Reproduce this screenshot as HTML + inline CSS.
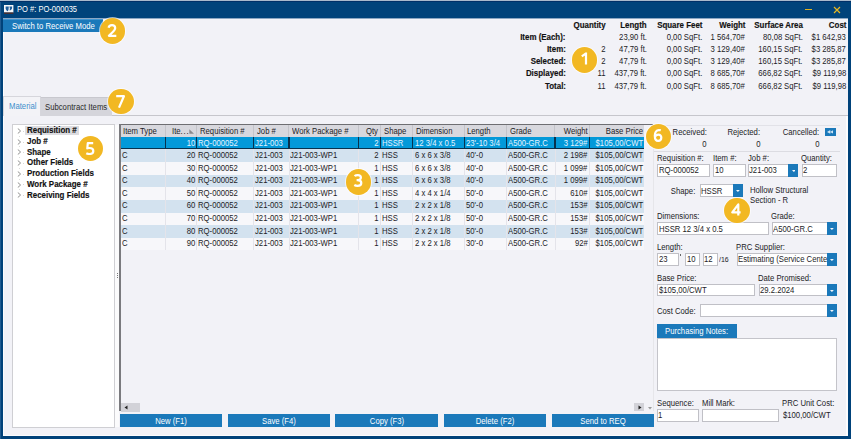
<!DOCTYPE html><html><head><meta charset="utf-8"><style>
*{box-sizing:border-box}
html,body{margin:0;padding:0}
body{width:851px;height:439px;overflow:hidden;position:relative;background:#00427a;font-family:"Liberation Sans",sans-serif;font-size:7.8px;color:#1c1c26}
.t{position:absolute;white-space:nowrap;line-height:12px;height:12px;font-size:8.3px;transform:scaleX(0.93)}
.b{position:absolute}
.bd{font-weight:bold;color:#111;transform:scaleX(0.955);-webkit-text-stroke:0.15px #111}
.w{color:#fff}
.circ{position:absolute;border-radius:50%;background:#f2b823;color:#fff;font-weight:bold;text-align:center;font-size:17px;box-shadow:0 0 0 1px rgba(255,255,255,0.6)}
</style></head><body>
<div class="b" style="left:0.00px;top:0.00px;width:851.00px;height:1.00px;background:#a9b9cc"></div>
<div class="b" style="left:0.00px;top:1.00px;width:851.00px;height:1.00px;background:#003068"></div>
<div class="b" style="left:0.00px;top:2.00px;width:851.00px;height:15.60px;background:#00437b"></div>
<div class="b" style="left:3.00px;top:17.60px;width:844.70px;height:418.40px;background:#f2f2f7"></div>
<div class="b" style="left:3.00px;top:17.60px;width:845.00px;height:1.20px;background:#8ca7c3"></div>
<div class="b" style="left:0.00px;top:2.00px;width:1.00px;height:437.00px;background:#1f5a90"></div>
<div class="b" style="left:3.00px;top:18.80px;width:1.30px;height:417.20px;background:#fbfbfd"></div>
<div class="b" style="left:3.00px;top:434.80px;width:845.00px;height:1.20px;background:#fbfbfd"></div>
<svg class="b" style="left:4.3px;top:4.8px" width="9.4" height="8.8" viewBox="0 0 9.4 8.8"><rect x="0" y="0" width="9.4" height="7.5" fill="#f6f8fa"/><rect x="0" y="7.5" width="9.4" height="1.3" fill="#5a2e22"/><path d="M1.6 1.6C2.6 1.4 3.6 1.4 4.8 1.6L4.6 4.2C4.4 5.4 3.8 6 3.4 6.2C2.6 5.6 1.8 4.6 1.6 3.4Z" fill="#1e5e9c"/><path d="M5.3 1.6C6.3 1.4 7.3 1.4 8.2 1.6L8 3.4C7.6 4.6 6.8 5.2 5.6 5.4L5.9 3.2Z" fill="#1e5e9c"/></svg>
<div class="t w" style="left:16.90px;top:3.90px;transform-origin:0 50%;font-size:8.14px">PO #: PO-000035</div>
<div class="b" style="left:805.00px;top:9.00px;width:6.50px;height:1.20px;background:#e0b020"></div>
<svg class="b" style="left:833px;top:5.5px" width="8" height="8" viewBox="0 0 8 8"><path d="M1 1L7 7M7 1L1 7" stroke="#e8b820" stroke-width="1.2"/></svg>
<div class="b" style="left:3.00px;top:18.80px;width:100.20px;height:13.70px;background:#1b79ba;border-top:1px solid #3f95d2"></div>
<div class="t w" style="left:11.70px;top:19.60px;transform-origin:0 50%;">Switch to Receive Mode</div>
<div class="t bd" style="right:285.10px;top:31.40px;transform-origin:100% 50%;">Item (Each):</div>
<div class="t bd" style="right:285.10px;top:43.20px;transform-origin:100% 50%;">Item:</div>
<div class="t bd" style="right:285.10px;top:55.00px;transform-origin:100% 50%;">Selected:</div>
<div class="t bd" style="right:285.10px;top:67.30px;transform-origin:100% 50%;">Displayed:</div>
<div class="t bd" style="right:285.10px;top:79.50px;transform-origin:100% 50%;">Total:</div>
<div class="t bd" style="right:245.00px;top:19.40px;transform-origin:100% 50%;">Quantity</div>
<div class="t " style="right:245.00px;top:43.20px;transform-origin:100% 50%;">2</div>
<div class="t " style="right:245.00px;top:55.00px;transform-origin:100% 50%;">2</div>
<div class="t " style="right:245.00px;top:67.30px;transform-origin:100% 50%;">11</div>
<div class="t " style="right:245.00px;top:79.50px;transform-origin:100% 50%;">11</div>
<div class="t bd" style="right:204.20px;top:19.40px;transform-origin:100% 50%;">Length</div>
<div class="t " style="right:204.20px;top:31.40px;transform-origin:100% 50%;">23,90 ft.</div>
<div class="t " style="right:204.20px;top:43.20px;transform-origin:100% 50%;">47,79 ft.</div>
<div class="t " style="right:204.20px;top:55.00px;transform-origin:100% 50%;">47,79 ft.</div>
<div class="t " style="right:204.20px;top:67.30px;transform-origin:100% 50%;">437,79 ft.</div>
<div class="t " style="right:204.20px;top:79.50px;transform-origin:100% 50%;">437,79 ft.</div>
<div class="t bd" style="right:148.80px;top:19.40px;transform-origin:100% 50%;">Square Feet</div>
<div class="t " style="right:148.80px;top:31.40px;transform-origin:100% 50%;">0,00 SqFt.</div>
<div class="t " style="right:148.80px;top:43.20px;transform-origin:100% 50%;">0,00 SqFt.</div>
<div class="t " style="right:148.80px;top:55.00px;transform-origin:100% 50%;">0,00 SqFt.</div>
<div class="t " style="right:148.80px;top:67.30px;transform-origin:100% 50%;">0,00 SqFt.</div>
<div class="t " style="right:148.80px;top:79.50px;transform-origin:100% 50%;">0,00 SqFt.</div>
<div class="t bd" style="right:105.70px;top:19.40px;transform-origin:100% 50%;">Weight</div>
<div class="t " style="right:105.70px;top:31.40px;transform-origin:100% 50%;">1 564,70#</div>
<div class="t " style="right:105.70px;top:43.20px;transform-origin:100% 50%;">3 129,40#</div>
<div class="t " style="right:105.70px;top:55.00px;transform-origin:100% 50%;">3 129,40#</div>
<div class="t " style="right:105.70px;top:67.30px;transform-origin:100% 50%;">8 685,70#</div>
<div class="t " style="right:105.70px;top:79.50px;transform-origin:100% 50%;">8 685,70#</div>
<div class="t bd" style="right:48.00px;top:19.40px;transform-origin:100% 50%;">Surface Area</div>
<div class="t " style="right:48.00px;top:31.40px;transform-origin:100% 50%;">80,08 SqFt.</div>
<div class="t " style="right:48.00px;top:43.20px;transform-origin:100% 50%;">160,15 SqFt.</div>
<div class="t " style="right:48.00px;top:55.00px;transform-origin:100% 50%;">160,15 SqFt.</div>
<div class="t " style="right:48.00px;top:67.30px;transform-origin:100% 50%;">666,82 SqFt.</div>
<div class="t " style="right:48.00px;top:79.50px;transform-origin:100% 50%;">666,82 SqFt.</div>
<div class="t bd" style="right:5.00px;top:19.40px;transform-origin:100% 50%;">Cost</div>
<div class="t " style="right:5.00px;top:31.40px;transform-origin:100% 50%;">$1 642,93</div>
<div class="t " style="right:5.00px;top:43.20px;transform-origin:100% 50%;">$3 285,87</div>
<div class="t " style="right:5.00px;top:55.00px;transform-origin:100% 50%;">$3 285,87</div>
<div class="t " style="right:5.00px;top:67.30px;transform-origin:100% 50%;">$9 119,98</div>
<div class="t " style="right:5.00px;top:79.50px;transform-origin:100% 50%;">$9 119,98</div>
<div class="b" style="left:3.00px;top:115.20px;width:845.00px;height:1.00px;background:#c6c6cc"></div>
<div class="b" style="left:846.20px;top:116.20px;width:1.50px;height:319.80px;background:#fdfdfe"></div>
<div class="b" style="left:3.00px;top:96.00px;width:37.60px;height:20.20px;background:#f3f3f7;border:1px solid #d6d6dc;border-bottom:none"></div>
<div class="b" style="left:40.60px;top:97.00px;width:71.40px;height:18.70px;background:#d5d5db;border-top:1px solid #c8c8ce"></div>
<div class="t " style="left:8.60px;top:100.20px;transform-origin:0 50%;color:#3d8fcc">Material</div>
<div class="t " style="left:44.70px;top:101.20px;transform-origin:0 50%;color:#2a2a2a">Subcontract Items</div>
<div class="b" style="left:12.10px;top:124.40px;width:102.90px;height:303.50px;background:#fff;border:1px solid #cfcfd3"></div>
<div class="b" style="left:25.00px;top:126.10px;width:53.50px;height:9.40px;background:#dcdce0"></div>
<div class="t bd" style="left:27.30px;top:124.20px;transform-origin:0 50%;">Requisition #</div>
<svg class="b" style="left:17.2px;top:128.00px" width="5" height="6" viewBox="0 0 5 6"><path d="M0.8 0.5L3.6 3L0.8 5.5" fill="none" stroke="#8a8a8a" stroke-width="0.95"/></svg>
<div class="b" style="left:23.20px;top:130.80px;width:1.00px;height:0.80px;background:#d8d8d8"></div>
<div class="b" style="left:19.30px;top:135.70px;width:0.80px;height:0.80px;background:#dadada"></div>
<div class="t bd" style="left:27.30px;top:134.92px;transform-origin:0 50%;">Job #</div>
<svg class="b" style="left:17.2px;top:138.72px" width="5" height="6" viewBox="0 0 5 6"><path d="M0.8 0.5L3.6 3L0.8 5.5" fill="none" stroke="#8a8a8a" stroke-width="0.95"/></svg>
<div class="b" style="left:23.20px;top:141.52px;width:1.00px;height:0.80px;background:#d8d8d8"></div>
<div class="b" style="left:19.30px;top:146.42px;width:0.80px;height:0.80px;background:#dadada"></div>
<div class="t bd" style="left:27.30px;top:145.64px;transform-origin:0 50%;">Shape</div>
<svg class="b" style="left:17.2px;top:149.44px" width="5" height="6" viewBox="0 0 5 6"><path d="M0.8 0.5L3.6 3L0.8 5.5" fill="none" stroke="#8a8a8a" stroke-width="0.95"/></svg>
<div class="b" style="left:23.20px;top:152.24px;width:1.00px;height:0.80px;background:#d8d8d8"></div>
<div class="b" style="left:19.30px;top:157.14px;width:0.80px;height:0.80px;background:#dadada"></div>
<div class="t bd" style="left:27.30px;top:156.36px;transform-origin:0 50%;">Other Fields</div>
<svg class="b" style="left:17.2px;top:160.16px" width="5" height="6" viewBox="0 0 5 6"><path d="M0.8 0.5L3.6 3L0.8 5.5" fill="none" stroke="#8a8a8a" stroke-width="0.95"/></svg>
<div class="b" style="left:23.20px;top:162.96px;width:1.00px;height:0.80px;background:#d8d8d8"></div>
<div class="b" style="left:19.30px;top:167.86px;width:0.80px;height:0.80px;background:#dadada"></div>
<div class="t bd" style="left:27.30px;top:167.08px;transform-origin:0 50%;">Production Fields</div>
<svg class="b" style="left:17.2px;top:170.88px" width="5" height="6" viewBox="0 0 5 6"><path d="M0.8 0.5L3.6 3L0.8 5.5" fill="none" stroke="#8a8a8a" stroke-width="0.95"/></svg>
<div class="b" style="left:23.20px;top:173.68px;width:1.00px;height:0.80px;background:#d8d8d8"></div>
<div class="b" style="left:19.30px;top:178.58px;width:0.80px;height:0.80px;background:#dadada"></div>
<div class="t bd" style="left:27.30px;top:177.80px;transform-origin:0 50%;">Work Package #</div>
<svg class="b" style="left:17.2px;top:181.60px" width="5" height="6" viewBox="0 0 5 6"><path d="M0.8 0.5L3.6 3L0.8 5.5" fill="none" stroke="#8a8a8a" stroke-width="0.95"/></svg>
<div class="b" style="left:23.20px;top:184.40px;width:1.00px;height:0.80px;background:#d8d8d8"></div>
<div class="b" style="left:19.30px;top:189.30px;width:0.80px;height:0.80px;background:#dadada"></div>
<div class="t bd" style="left:27.30px;top:188.52px;transform-origin:0 50%;">Receiving Fields</div>
<svg class="b" style="left:17.2px;top:192.32px" width="5" height="6" viewBox="0 0 5 6"><path d="M0.8 0.5L3.6 3L0.8 5.5" fill="none" stroke="#8a8a8a" stroke-width="0.95"/></svg>
<div class="b" style="left:23.20px;top:195.12px;width:1.00px;height:0.80px;background:#d8d8d8"></div>
<div class="b" style="left:114.80px;top:124.50px;width:4.30px;height:302.90px;background:#fbfbfc"></div>
<div class="b" style="left:116.90px;top:273.20px;width:0.90px;height:0.90px;background:#777"></div>
<div class="b" style="left:116.90px;top:274.90px;width:0.90px;height:0.90px;background:#777"></div>
<div class="b" style="left:116.90px;top:276.60px;width:0.90px;height:0.90px;background:#777"></div>
<div class="b" style="left:119.10px;top:124.20px;width:534.60px;height:1.20px;background:#6e6e72"></div>
<div class="b" style="left:119.10px;top:124.20px;width:1.80px;height:287.30px;background:#7a7a7e"></div>
<div class="b" style="left:652.80px;top:124.20px;width:0.90px;height:287.30px;background:#e6e6ea"></div>
<div class="b" style="left:120.60px;top:125.20px;width:523.60px;height:12.00px;background:#d8d8de"></div>
<div class="b" style="left:165.00px;top:125.20px;width:1.00px;height:12.00px;background:#c4c4ca"></div>
<div class="b" style="left:195.90px;top:125.20px;width:1.00px;height:12.00px;background:#c4c4ca"></div>
<div class="b" style="left:252.90px;top:125.20px;width:1.00px;height:12.00px;background:#c4c4ca"></div>
<div class="b" style="left:288.40px;top:125.20px;width:1.00px;height:12.00px;background:#c4c4ca"></div>
<div class="b" style="left:358.20px;top:125.20px;width:1.00px;height:12.00px;background:#c4c4ca"></div>
<div class="b" style="left:379.90px;top:125.20px;width:1.00px;height:12.00px;background:#c4c4ca"></div>
<div class="b" style="left:412.10px;top:125.20px;width:1.00px;height:12.00px;background:#c4c4ca"></div>
<div class="b" style="left:463.70px;top:125.20px;width:1.00px;height:12.00px;background:#c4c4ca"></div>
<div class="b" style="left:506.00px;top:125.20px;width:1.00px;height:12.00px;background:#c4c4ca"></div>
<div class="b" style="left:554.40px;top:125.20px;width:1.00px;height:12.00px;background:#c4c4ca"></div>
<div class="b" style="left:589.20px;top:125.20px;width:1.00px;height:12.00px;background:#c4c4ca"></div>
<div class="b" style="left:120.60px;top:136.60px;width:523.60px;height:0.60px;background:#f4ecec"></div>
<div class="t " style="left:122.90px;top:125.00px;transform-origin:0 50%;">Item Type</div>
<div class="t " style="left:171.50px;top:125.00px;transform-origin:0 50%;">Ite<span style="letter-spacing:0.9px">...</span></div>
<svg class="b" style="left:189.4px;top:128.8px" width="5" height="5" viewBox="0 0 5 5"><path d="M0.3 0.2V4.7H5Z" fill="#8a8a8e"/></svg>
<div class="t " style="left:200.00px;top:125.00px;transform-origin:0 50%;">Requisition #</div>
<div class="t " style="left:256.50px;top:125.00px;transform-origin:0 50%;">Job #</div>
<div class="t " style="left:292.30px;top:125.00px;transform-origin:0 50%;">Work Package #</div>
<div class="t " style="right:473.10px;top:125.00px;transform-origin:100% 50%;">Qty</div>
<div class="t " style="left:383.80px;top:125.00px;transform-origin:0 50%;">Shape</div>
<div class="t " style="left:416.10px;top:125.00px;transform-origin:0 50%;">Dimension</div>
<div class="t " style="left:467.40px;top:125.00px;transform-origin:0 50%;">Length</div>
<div class="t " style="left:509.70px;top:125.00px;transform-origin:0 50%;">Grade</div>
<div class="t " style="right:263.20px;top:125.00px;transform-origin:100% 50%;">Weight</div>
<div class="t " style="right:208.10px;top:125.00px;transform-origin:100% 50%;">Base Price</div>
<div class="b" style="left:120.60px;top:137.20px;width:523.60px;height:12.20px;background:#0399d9"></div>
<div class="b" style="left:120.60px;top:148.40px;width:523.60px;height:1.00px;background:#08324e"></div>
<div class="b" style="left:164.80px;top:137.20px;width:1.40px;height:12.20px;background:#08324e"></div>
<div class="b" style="left:195.70px;top:137.20px;width:1.40px;height:12.20px;background:#08324e"></div>
<div class="b" style="left:252.70px;top:137.20px;width:1.40px;height:12.20px;background:#08324e"></div>
<div class="b" style="left:288.20px;top:137.20px;width:1.40px;height:12.20px;background:#08324e"></div>
<div class="b" style="left:358.00px;top:137.20px;width:1.40px;height:12.20px;background:#08324e"></div>
<div class="b" style="left:379.70px;top:137.20px;width:1.40px;height:12.20px;background:#08324e"></div>
<div class="b" style="left:411.90px;top:137.20px;width:1.40px;height:12.20px;background:#08324e"></div>
<div class="b" style="left:463.50px;top:137.20px;width:1.40px;height:12.20px;background:#08324e"></div>
<div class="b" style="left:505.80px;top:137.20px;width:1.40px;height:12.20px;background:#08324e"></div>
<div class="b" style="left:554.20px;top:137.20px;width:1.40px;height:12.20px;background:#08324e"></div>
<div class="b" style="left:589.00px;top:137.20px;width:1.40px;height:12.20px;background:#08324e"></div>
<div class="t w" style="right:656.00px;top:136.50px;transform-origin:100% 50%;color:#e6f4ff">10</div>
<div class="t w" style="left:198.30px;top:136.50px;transform-origin:0 50%;color:#e6f4ff">RQ-000052</div>
<div class="t w" style="left:254.90px;top:136.50px;transform-origin:0 50%;color:#e6f4ff">J21-003</div>
<div class="t w" style="right:472.20px;top:136.50px;transform-origin:100% 50%;color:#e6f4ff">2</div>
<div class="t w" style="left:381.90px;top:136.50px;transform-origin:0 50%;color:#e6f4ff">HSSR</div>
<div class="t w" style="left:415.30px;top:136.50px;transform-origin:0 50%;color:#e6f4ff">12 3/4 x 0.5</div>
<div class="t w" style="left:465.50px;top:136.50px;transform-origin:0 50%;color:#e6f4ff">23'-10 3/4</div>
<div class="t w" style="left:507.60px;top:136.50px;transform-origin:0 50%;color:#e6f4ff">A500-GR.C</div>
<div class="t w" style="right:263.20px;top:136.50px;transform-origin:100% 50%;color:#e6f4ff">3 129#</div>
<div class="t w" style="right:207.40px;top:136.50px;transform-origin:100% 50%;color:#e6f4ff">$105,00/CWT</div>
<div class="b" style="left:120.60px;top:149.40px;width:523.60px;height:12.63px;background:#d3e2ef"></div>
<div class="b" style="left:165.10px;top:149.40px;width:0.80px;height:12.63px;background:#e4e4ea"></div>
<div class="b" style="left:196.00px;top:149.40px;width:0.80px;height:12.63px;background:#e4e4ea"></div>
<div class="b" style="left:253.00px;top:149.40px;width:0.80px;height:12.63px;background:#e4e4ea"></div>
<div class="b" style="left:288.50px;top:149.40px;width:0.80px;height:12.63px;background:#e4e4ea"></div>
<div class="b" style="left:358.30px;top:149.40px;width:0.80px;height:12.63px;background:#e4e4ea"></div>
<div class="b" style="left:380.00px;top:149.40px;width:0.80px;height:12.63px;background:#e4e4ea"></div>
<div class="b" style="left:412.20px;top:149.40px;width:0.80px;height:12.63px;background:#e4e4ea"></div>
<div class="b" style="left:463.80px;top:149.40px;width:0.80px;height:12.63px;background:#e4e4ea"></div>
<div class="b" style="left:506.10px;top:149.40px;width:0.80px;height:12.63px;background:#e4e4ea"></div>
<div class="b" style="left:554.50px;top:149.40px;width:0.80px;height:12.63px;background:#e4e4ea"></div>
<div class="b" style="left:589.30px;top:149.40px;width:0.80px;height:12.63px;background:#e4e4ea"></div>
<div class="t " style="left:121.80px;top:148.91px;transform-origin:0 50%;">C</div>
<div class="t " style="right:656.00px;top:148.91px;transform-origin:100% 50%;">20</div>
<div class="t " style="left:198.30px;top:148.91px;transform-origin:0 50%;">RQ-000052</div>
<div class="t " style="left:254.90px;top:148.91px;transform-origin:0 50%;">J21-003</div>
<div class="t " style="left:289.80px;top:148.91px;transform-origin:0 50%;">J21-003-WP1</div>
<div class="t " style="right:472.20px;top:148.91px;transform-origin:100% 50%;">2</div>
<div class="t " style="left:381.90px;top:148.91px;transform-origin:0 50%;">HSS</div>
<div class="t " style="left:415.30px;top:148.91px;transform-origin:0 50%;">6 x 6 x 3/8</div>
<div class="t " style="left:465.50px;top:148.91px;transform-origin:0 50%;">40'-0</div>
<div class="t " style="left:507.60px;top:148.91px;transform-origin:0 50%;">A500-GR.C</div>
<div class="t " style="right:263.20px;top:148.91px;transform-origin:100% 50%;">2 198#</div>
<div class="t " style="right:207.40px;top:148.91px;transform-origin:100% 50%;">$105,00/CWT</div>
<div class="b" style="left:120.60px;top:162.03px;width:523.60px;height:12.63px;background:#f7f7fa"></div>
<div class="b" style="left:165.10px;top:162.03px;width:0.80px;height:12.63px;background:#e4e4ea"></div>
<div class="b" style="left:196.00px;top:162.03px;width:0.80px;height:12.63px;background:#e4e4ea"></div>
<div class="b" style="left:253.00px;top:162.03px;width:0.80px;height:12.63px;background:#e4e4ea"></div>
<div class="b" style="left:288.50px;top:162.03px;width:0.80px;height:12.63px;background:#e4e4ea"></div>
<div class="b" style="left:358.30px;top:162.03px;width:0.80px;height:12.63px;background:#e4e4ea"></div>
<div class="b" style="left:380.00px;top:162.03px;width:0.80px;height:12.63px;background:#e4e4ea"></div>
<div class="b" style="left:412.20px;top:162.03px;width:0.80px;height:12.63px;background:#e4e4ea"></div>
<div class="b" style="left:463.80px;top:162.03px;width:0.80px;height:12.63px;background:#e4e4ea"></div>
<div class="b" style="left:506.10px;top:162.03px;width:0.80px;height:12.63px;background:#e4e4ea"></div>
<div class="b" style="left:554.50px;top:162.03px;width:0.80px;height:12.63px;background:#e4e4ea"></div>
<div class="b" style="left:589.30px;top:162.03px;width:0.80px;height:12.63px;background:#e4e4ea"></div>
<div class="t " style="left:121.80px;top:161.54px;transform-origin:0 50%;">C</div>
<div class="t " style="right:656.00px;top:161.54px;transform-origin:100% 50%;">30</div>
<div class="t " style="left:198.30px;top:161.54px;transform-origin:0 50%;">RQ-000052</div>
<div class="t " style="left:254.90px;top:161.54px;transform-origin:0 50%;">J21-003</div>
<div class="t " style="left:289.80px;top:161.54px;transform-origin:0 50%;">J21-003-WP1</div>
<div class="t " style="right:472.20px;top:161.54px;transform-origin:100% 50%;">1</div>
<div class="t " style="left:381.90px;top:161.54px;transform-origin:0 50%;">HSS</div>
<div class="t " style="left:415.30px;top:161.54px;transform-origin:0 50%;">6 x 6 x 3/8</div>
<div class="t " style="left:465.50px;top:161.54px;transform-origin:0 50%;">40'-0</div>
<div class="t " style="left:507.60px;top:161.54px;transform-origin:0 50%;">A500-GR.C</div>
<div class="t " style="right:263.20px;top:161.54px;transform-origin:100% 50%;">1 099#</div>
<div class="t " style="right:207.40px;top:161.54px;transform-origin:100% 50%;">$105,00/CWT</div>
<div class="b" style="left:120.60px;top:174.66px;width:523.60px;height:12.63px;background:#d3e2ef"></div>
<div class="b" style="left:165.10px;top:174.66px;width:0.80px;height:12.63px;background:#e4e4ea"></div>
<div class="b" style="left:196.00px;top:174.66px;width:0.80px;height:12.63px;background:#e4e4ea"></div>
<div class="b" style="left:253.00px;top:174.66px;width:0.80px;height:12.63px;background:#e4e4ea"></div>
<div class="b" style="left:288.50px;top:174.66px;width:0.80px;height:12.63px;background:#e4e4ea"></div>
<div class="b" style="left:358.30px;top:174.66px;width:0.80px;height:12.63px;background:#e4e4ea"></div>
<div class="b" style="left:380.00px;top:174.66px;width:0.80px;height:12.63px;background:#e4e4ea"></div>
<div class="b" style="left:412.20px;top:174.66px;width:0.80px;height:12.63px;background:#e4e4ea"></div>
<div class="b" style="left:463.80px;top:174.66px;width:0.80px;height:12.63px;background:#e4e4ea"></div>
<div class="b" style="left:506.10px;top:174.66px;width:0.80px;height:12.63px;background:#e4e4ea"></div>
<div class="b" style="left:554.50px;top:174.66px;width:0.80px;height:12.63px;background:#e4e4ea"></div>
<div class="b" style="left:589.30px;top:174.66px;width:0.80px;height:12.63px;background:#e4e4ea"></div>
<div class="t " style="left:121.80px;top:174.17px;transform-origin:0 50%;">C</div>
<div class="t " style="right:656.00px;top:174.17px;transform-origin:100% 50%;">40</div>
<div class="t " style="left:198.30px;top:174.17px;transform-origin:0 50%;">RQ-000052</div>
<div class="t " style="left:254.90px;top:174.17px;transform-origin:0 50%;">J21-003</div>
<div class="t " style="left:289.80px;top:174.17px;transform-origin:0 50%;">J21-003-WP1</div>
<div class="t " style="right:472.20px;top:174.17px;transform-origin:100% 50%;">1</div>
<div class="t " style="left:381.90px;top:174.17px;transform-origin:0 50%;">HSS</div>
<div class="t " style="left:415.30px;top:174.17px;transform-origin:0 50%;">6 x 6 x 3/8</div>
<div class="t " style="left:465.50px;top:174.17px;transform-origin:0 50%;">40'-0</div>
<div class="t " style="left:507.60px;top:174.17px;transform-origin:0 50%;">A500-GR.C</div>
<div class="t " style="right:263.20px;top:174.17px;transform-origin:100% 50%;">1 099#</div>
<div class="t " style="right:207.40px;top:174.17px;transform-origin:100% 50%;">$105,00/CWT</div>
<div class="b" style="left:120.60px;top:187.29px;width:523.60px;height:12.63px;background:#f7f7fa"></div>
<div class="b" style="left:165.10px;top:187.29px;width:0.80px;height:12.63px;background:#e4e4ea"></div>
<div class="b" style="left:196.00px;top:187.29px;width:0.80px;height:12.63px;background:#e4e4ea"></div>
<div class="b" style="left:253.00px;top:187.29px;width:0.80px;height:12.63px;background:#e4e4ea"></div>
<div class="b" style="left:288.50px;top:187.29px;width:0.80px;height:12.63px;background:#e4e4ea"></div>
<div class="b" style="left:358.30px;top:187.29px;width:0.80px;height:12.63px;background:#e4e4ea"></div>
<div class="b" style="left:380.00px;top:187.29px;width:0.80px;height:12.63px;background:#e4e4ea"></div>
<div class="b" style="left:412.20px;top:187.29px;width:0.80px;height:12.63px;background:#e4e4ea"></div>
<div class="b" style="left:463.80px;top:187.29px;width:0.80px;height:12.63px;background:#e4e4ea"></div>
<div class="b" style="left:506.10px;top:187.29px;width:0.80px;height:12.63px;background:#e4e4ea"></div>
<div class="b" style="left:554.50px;top:187.29px;width:0.80px;height:12.63px;background:#e4e4ea"></div>
<div class="b" style="left:589.30px;top:187.29px;width:0.80px;height:12.63px;background:#e4e4ea"></div>
<div class="t " style="left:121.80px;top:186.81px;transform-origin:0 50%;">C</div>
<div class="t " style="right:656.00px;top:186.81px;transform-origin:100% 50%;">50</div>
<div class="t " style="left:198.30px;top:186.81px;transform-origin:0 50%;">RQ-000052</div>
<div class="t " style="left:254.90px;top:186.81px;transform-origin:0 50%;">J21-003</div>
<div class="t " style="left:289.80px;top:186.81px;transform-origin:0 50%;">J21-003-WP1</div>
<div class="t " style="right:472.20px;top:186.81px;transform-origin:100% 50%;">1</div>
<div class="t " style="left:381.90px;top:186.81px;transform-origin:0 50%;">HSS</div>
<div class="t " style="left:415.30px;top:186.81px;transform-origin:0 50%;">4 x 4 x 1/4</div>
<div class="t " style="left:465.50px;top:186.81px;transform-origin:0 50%;">50'-0</div>
<div class="t " style="left:507.60px;top:186.81px;transform-origin:0 50%;">A500-GR.C</div>
<div class="t " style="right:263.20px;top:186.81px;transform-origin:100% 50%;">610#</div>
<div class="t " style="right:207.40px;top:186.81px;transform-origin:100% 50%;">$105,00/CWT</div>
<div class="b" style="left:120.60px;top:199.92px;width:523.60px;height:12.63px;background:#d3e2ef"></div>
<div class="b" style="left:165.10px;top:199.92px;width:0.80px;height:12.63px;background:#e4e4ea"></div>
<div class="b" style="left:196.00px;top:199.92px;width:0.80px;height:12.63px;background:#e4e4ea"></div>
<div class="b" style="left:253.00px;top:199.92px;width:0.80px;height:12.63px;background:#e4e4ea"></div>
<div class="b" style="left:288.50px;top:199.92px;width:0.80px;height:12.63px;background:#e4e4ea"></div>
<div class="b" style="left:358.30px;top:199.92px;width:0.80px;height:12.63px;background:#e4e4ea"></div>
<div class="b" style="left:380.00px;top:199.92px;width:0.80px;height:12.63px;background:#e4e4ea"></div>
<div class="b" style="left:412.20px;top:199.92px;width:0.80px;height:12.63px;background:#e4e4ea"></div>
<div class="b" style="left:463.80px;top:199.92px;width:0.80px;height:12.63px;background:#e4e4ea"></div>
<div class="b" style="left:506.10px;top:199.92px;width:0.80px;height:12.63px;background:#e4e4ea"></div>
<div class="b" style="left:554.50px;top:199.92px;width:0.80px;height:12.63px;background:#e4e4ea"></div>
<div class="b" style="left:589.30px;top:199.92px;width:0.80px;height:12.63px;background:#e4e4ea"></div>
<div class="t " style="left:121.80px;top:199.44px;transform-origin:0 50%;">C</div>
<div class="t " style="right:656.00px;top:199.44px;transform-origin:100% 50%;">60</div>
<div class="t " style="left:198.30px;top:199.44px;transform-origin:0 50%;">RQ-000052</div>
<div class="t " style="left:254.90px;top:199.44px;transform-origin:0 50%;">J21-003</div>
<div class="t " style="left:289.80px;top:199.44px;transform-origin:0 50%;">J21-003-WP1</div>
<div class="t " style="right:472.20px;top:199.44px;transform-origin:100% 50%;">1</div>
<div class="t " style="left:381.90px;top:199.44px;transform-origin:0 50%;">HSS</div>
<div class="t " style="left:415.30px;top:199.44px;transform-origin:0 50%;">2 x 2 x 1/8</div>
<div class="t " style="left:465.50px;top:199.44px;transform-origin:0 50%;">50'-0</div>
<div class="t " style="left:507.60px;top:199.44px;transform-origin:0 50%;">A500-GR.C</div>
<div class="t " style="right:263.20px;top:199.44px;transform-origin:100% 50%;">153#</div>
<div class="t " style="right:207.40px;top:199.44px;transform-origin:100% 50%;">$105,00/CWT</div>
<div class="b" style="left:120.60px;top:212.55px;width:523.60px;height:12.63px;background:#f7f7fa"></div>
<div class="b" style="left:165.10px;top:212.55px;width:0.80px;height:12.63px;background:#e4e4ea"></div>
<div class="b" style="left:196.00px;top:212.55px;width:0.80px;height:12.63px;background:#e4e4ea"></div>
<div class="b" style="left:253.00px;top:212.55px;width:0.80px;height:12.63px;background:#e4e4ea"></div>
<div class="b" style="left:288.50px;top:212.55px;width:0.80px;height:12.63px;background:#e4e4ea"></div>
<div class="b" style="left:358.30px;top:212.55px;width:0.80px;height:12.63px;background:#e4e4ea"></div>
<div class="b" style="left:380.00px;top:212.55px;width:0.80px;height:12.63px;background:#e4e4ea"></div>
<div class="b" style="left:412.20px;top:212.55px;width:0.80px;height:12.63px;background:#e4e4ea"></div>
<div class="b" style="left:463.80px;top:212.55px;width:0.80px;height:12.63px;background:#e4e4ea"></div>
<div class="b" style="left:506.10px;top:212.55px;width:0.80px;height:12.63px;background:#e4e4ea"></div>
<div class="b" style="left:554.50px;top:212.55px;width:0.80px;height:12.63px;background:#e4e4ea"></div>
<div class="b" style="left:589.30px;top:212.55px;width:0.80px;height:12.63px;background:#e4e4ea"></div>
<div class="t " style="left:121.80px;top:212.06px;transform-origin:0 50%;">C</div>
<div class="t " style="right:656.00px;top:212.06px;transform-origin:100% 50%;">70</div>
<div class="t " style="left:198.30px;top:212.06px;transform-origin:0 50%;">RQ-000052</div>
<div class="t " style="left:254.90px;top:212.06px;transform-origin:0 50%;">J21-003</div>
<div class="t " style="left:289.80px;top:212.06px;transform-origin:0 50%;">J21-003-WP1</div>
<div class="t " style="right:472.20px;top:212.06px;transform-origin:100% 50%;">1</div>
<div class="t " style="left:381.90px;top:212.06px;transform-origin:0 50%;">HSS</div>
<div class="t " style="left:415.30px;top:212.06px;transform-origin:0 50%;">2 x 2 x 1/8</div>
<div class="t " style="left:465.50px;top:212.06px;transform-origin:0 50%;">50'-0</div>
<div class="t " style="left:507.60px;top:212.06px;transform-origin:0 50%;">A500-GR.C</div>
<div class="t " style="right:263.20px;top:212.06px;transform-origin:100% 50%;">153#</div>
<div class="t " style="right:207.40px;top:212.06px;transform-origin:100% 50%;">$105,00/CWT</div>
<div class="b" style="left:120.60px;top:225.18px;width:523.60px;height:12.63px;background:#d3e2ef"></div>
<div class="b" style="left:165.10px;top:225.18px;width:0.80px;height:12.63px;background:#e4e4ea"></div>
<div class="b" style="left:196.00px;top:225.18px;width:0.80px;height:12.63px;background:#e4e4ea"></div>
<div class="b" style="left:253.00px;top:225.18px;width:0.80px;height:12.63px;background:#e4e4ea"></div>
<div class="b" style="left:288.50px;top:225.18px;width:0.80px;height:12.63px;background:#e4e4ea"></div>
<div class="b" style="left:358.30px;top:225.18px;width:0.80px;height:12.63px;background:#e4e4ea"></div>
<div class="b" style="left:380.00px;top:225.18px;width:0.80px;height:12.63px;background:#e4e4ea"></div>
<div class="b" style="left:412.20px;top:225.18px;width:0.80px;height:12.63px;background:#e4e4ea"></div>
<div class="b" style="left:463.80px;top:225.18px;width:0.80px;height:12.63px;background:#e4e4ea"></div>
<div class="b" style="left:506.10px;top:225.18px;width:0.80px;height:12.63px;background:#e4e4ea"></div>
<div class="b" style="left:554.50px;top:225.18px;width:0.80px;height:12.63px;background:#e4e4ea"></div>
<div class="b" style="left:589.30px;top:225.18px;width:0.80px;height:12.63px;background:#e4e4ea"></div>
<div class="t " style="left:121.80px;top:224.69px;transform-origin:0 50%;">C</div>
<div class="t " style="right:656.00px;top:224.69px;transform-origin:100% 50%;">80</div>
<div class="t " style="left:198.30px;top:224.69px;transform-origin:0 50%;">RQ-000052</div>
<div class="t " style="left:254.90px;top:224.69px;transform-origin:0 50%;">J21-003</div>
<div class="t " style="left:289.80px;top:224.69px;transform-origin:0 50%;">J21-003-WP1</div>
<div class="t " style="right:472.20px;top:224.69px;transform-origin:100% 50%;">1</div>
<div class="t " style="left:381.90px;top:224.69px;transform-origin:0 50%;">HSS</div>
<div class="t " style="left:415.30px;top:224.69px;transform-origin:0 50%;">2 x 2 x 1/8</div>
<div class="t " style="left:465.50px;top:224.69px;transform-origin:0 50%;">50'-0</div>
<div class="t " style="left:507.60px;top:224.69px;transform-origin:0 50%;">A500-GR.C</div>
<div class="t " style="right:263.20px;top:224.69px;transform-origin:100% 50%;">153#</div>
<div class="t " style="right:207.40px;top:224.69px;transform-origin:100% 50%;">$105,00/CWT</div>
<div class="b" style="left:120.60px;top:237.81px;width:523.60px;height:12.63px;background:#f7f7fa"></div>
<div class="b" style="left:165.10px;top:237.81px;width:0.80px;height:12.63px;background:#e4e4ea"></div>
<div class="b" style="left:196.00px;top:237.81px;width:0.80px;height:12.63px;background:#e4e4ea"></div>
<div class="b" style="left:253.00px;top:237.81px;width:0.80px;height:12.63px;background:#e4e4ea"></div>
<div class="b" style="left:288.50px;top:237.81px;width:0.80px;height:12.63px;background:#e4e4ea"></div>
<div class="b" style="left:358.30px;top:237.81px;width:0.80px;height:12.63px;background:#e4e4ea"></div>
<div class="b" style="left:380.00px;top:237.81px;width:0.80px;height:12.63px;background:#e4e4ea"></div>
<div class="b" style="left:412.20px;top:237.81px;width:0.80px;height:12.63px;background:#e4e4ea"></div>
<div class="b" style="left:463.80px;top:237.81px;width:0.80px;height:12.63px;background:#e4e4ea"></div>
<div class="b" style="left:506.10px;top:237.81px;width:0.80px;height:12.63px;background:#e4e4ea"></div>
<div class="b" style="left:554.50px;top:237.81px;width:0.80px;height:12.63px;background:#e4e4ea"></div>
<div class="b" style="left:589.30px;top:237.81px;width:0.80px;height:12.63px;background:#e4e4ea"></div>
<div class="t " style="left:121.80px;top:237.32px;transform-origin:0 50%;">C</div>
<div class="t " style="right:656.00px;top:237.32px;transform-origin:100% 50%;">90</div>
<div class="t " style="left:198.30px;top:237.32px;transform-origin:0 50%;">RQ-000052</div>
<div class="t " style="left:254.90px;top:237.32px;transform-origin:0 50%;">J21-003</div>
<div class="t " style="left:289.80px;top:237.32px;transform-origin:0 50%;">J21-003-WP1</div>
<div class="t " style="right:472.20px;top:237.32px;transform-origin:100% 50%;">1</div>
<div class="t " style="left:381.90px;top:237.32px;transform-origin:0 50%;">HSS</div>
<div class="t " style="left:415.30px;top:237.32px;transform-origin:0 50%;">2 x 2 x 1/8</div>
<div class="t " style="left:465.50px;top:237.32px;transform-origin:0 50%;">30'-0</div>
<div class="t " style="left:507.60px;top:237.32px;transform-origin:0 50%;">A500-GR.C</div>
<div class="t " style="right:263.20px;top:237.32px;transform-origin:100% 50%;">92#</div>
<div class="t " style="right:207.40px;top:237.32px;transform-origin:100% 50%;">$105,00/CWT</div>
<div class="b" style="left:120.60px;top:403.00px;width:19.90px;height:8.50px;background:#d2d2d8"></div>
<svg class="b" style="left:123.5px;top:405px" width="4" height="5" viewBox="0 0 4 5"><path d="M3.5 0.5V4.5L0.5 2.5Z" fill="#222"/></svg>
<div class="b" style="left:634.00px;top:403.10px;width:10.00px;height:8.20px;background:#d2d2d8"></div>
<svg class="b" style="left:637.5px;top:405px" width="4" height="5" viewBox="0 0 4 5"><path d="M0.5 0.5V4.5L3.5 2.5Z" fill="#222"/></svg>
<svg class="b" style="left:647.5px;top:407px" width="4" height="3" viewBox="0 0 4 3"><path d="M0 0H4L2 2.5Z" fill="#999"/></svg>
<div class="b" style="left:119.90px;top:413.90px;width:102.60px;height:13.50px;background:#1b79ba"></div>
<div class="t w" style="left:71.20px;width:200px;text-align:center;top:414.60px;">New (F1)</div>
<div class="b" style="left:228.00px;top:413.90px;width:102.40px;height:13.50px;background:#1b79ba"></div>
<div class="t w" style="left:179.20px;width:200px;text-align:center;top:414.60px;">Save (F4)</div>
<div class="b" style="left:335.30px;top:413.90px;width:103.20px;height:13.50px;background:#1b79ba"></div>
<div class="t w" style="left:286.90px;width:200px;text-align:center;top:414.60px;">Copy (F3)</div>
<div class="b" style="left:444.00px;top:413.90px;width:102.20px;height:13.50px;background:#1b79ba"></div>
<div class="t w" style="left:395.10px;width:200px;text-align:center;top:414.60px;">Delete (F2)</div>
<div class="b" style="left:551.60px;top:413.90px;width:102.70px;height:13.50px;background:#1b79ba"></div>
<div class="t w" style="left:502.95px;width:200px;text-align:center;top:414.60px;">Send to REQ</div>
<div class="b" style="left:654.00px;top:125.10px;width:186.00px;height:0.80px;background:#e2e2e8"></div>
<div class="t " style="right:144.30px;top:125.80px;transform-origin:100% 50%;">Received:</div>
<div class="t " style="right:90.50px;top:125.80px;transform-origin:100% 50%;">Rejected:</div>
<div class="t " style="right:31.40px;top:125.80px;transform-origin:100% 50%;">Cancelled:</div>
<div class="t " style="right:144.30px;top:137.60px;transform-origin:100% 50%;">0</div>
<div class="t " style="right:90.50px;top:137.60px;transform-origin:100% 50%;">0</div>
<div class="t " style="right:31.40px;top:137.60px;transform-origin:100% 50%;">0</div>
<div class="b" style="left:825.00px;top:127.80px;width:11.00px;height:8.20px;background:#1b79ba"></div>
<svg class="b" style="left:826.9px;top:130px" width="6.4" height="3.8" viewBox="0 0 6.4 3.8"><path d="M3.3 0L0 1.9L3.3 3.8ZM6.4 0L3.1 1.9L6.4 3.8Z" fill="#cfe6f6"/></svg>
<div class="b" style="left:654.00px;top:150.50px;width:186.00px;height:0.80px;background:#dcdce2"></div>
<div class="t " style="left:657.10px;top:151.80px;transform-origin:0 50%;">Requisition #:</div>
<div class="t " style="left:712.60px;top:151.80px;transform-origin:0 50%;">Item #:</div>
<div class="t " style="left:748.00px;top:151.80px;transform-origin:0 50%;">Job #:</div>
<div class="t " style="left:801.20px;top:151.80px;transform-origin:0 50%;">Quantity:</div>
<div class="b" style="left:657.30px;top:163.70px;width:52.90px;height:13.10px;background:#fff;border:1px solid #c0c0c6"></div>
<div class="t " style="left:658.50px;top:164.25px;transform-origin:0 50%;">RQ-000052</div>
<div class="b" style="left:713.30px;top:163.70px;width:32.30px;height:13.10px;background:#fff;border:1px solid #c0c0c6"></div>
<div class="t " style="left:714.50px;top:164.25px;transform-origin:0 50%;">10</div>
<div class="b" style="left:748.00px;top:163.70px;width:50.40px;height:13.10px;background:#fff;border:1px solid #c0c0c6"></div>
<div class="t " style="left:749.20px;top:164.25px;transform-origin:0 50%;">J21-003</div>
<div class="b" style="left:788.10px;top:163.70px;width:10.30px;height:13.10px;background:#1b79ba"></div>
<svg class="b" style="left:791.50px;top:169.75px" width="3.8" height="2.4" viewBox="0 0 3.8 2.4"><path d="M0 0H3.8L1.9 2.1Z" fill="#f4f8fc"/></svg>
<div class="b" style="left:801.50px;top:163.70px;width:35.50px;height:13.10px;background:#fff;border:1px solid #c0c0c6"></div>
<div class="t " style="left:802.70px;top:164.25px;transform-origin:0 50%;">2</div>
<div class="t " style="right:156.10px;top:185.00px;transform-origin:100% 50%;">Shape:</div>
<div class="b" style="left:700.00px;top:184.40px;width:43.30px;height:12.80px;background:#fff;border:1px solid #c0c0c6"></div>
<div class="t " style="left:701.20px;top:184.80px;transform-origin:0 50%;">HSSR</div>
<div class="b" style="left:733.00px;top:184.40px;width:10.30px;height:12.80px;background:#1b79ba"></div>
<svg class="b" style="left:736.40px;top:190.30px" width="3.8" height="2.4" viewBox="0 0 3.8 2.4"><path d="M0 0H3.8L1.9 2.1Z" fill="#f4f8fc"/></svg>
<div class="t " style="left:750.40px;top:184.40px;transform-origin:0 50%;">Hollow Structural</div>
<div class="t " style="left:750.40px;top:193.60px;transform-origin:0 50%;">Section - R</div>
<div class="t " style="left:657.10px;top:210.30px;transform-origin:0 50%;">Dimensions:</div>
<div class="t " style="left:771.00px;top:210.30px;transform-origin:0 50%;">Grade:</div>
<div class="b" style="left:657.30px;top:222.30px;width:111.30px;height:12.90px;background:#fff;border:1px solid #c0c0c6"></div>
<div class="t " style="left:658.50px;top:222.75px;transform-origin:0 50%;">HSSR 12 3/4 x 0.5</div>
<div class="b" style="left:771.50px;top:222.30px;width:65.50px;height:12.90px;background:#fff;border:1px solid #c0c0c6"></div>
<div class="t " style="left:772.70px;top:222.75px;transform-origin:0 50%;">A500-GR.C</div>
<div class="b" style="left:826.70px;top:222.30px;width:10.30px;height:12.90px;background:#1b79ba"></div>
<svg class="b" style="left:830.10px;top:228.25px" width="3.8" height="2.4" viewBox="0 0 3.8 2.4"><path d="M0 0H3.8L1.9 2.1Z" fill="#f4f8fc"/></svg>
<div class="t " style="left:657.10px;top:240.80px;transform-origin:0 50%;">Length:</div>
<div class="t " style="left:736.20px;top:240.80px;transform-origin:0 50%;">PRC Supplier:</div>
<div class="b" style="left:657.30px;top:253.20px;width:21.50px;height:12.50px;background:#fff;border:1px solid #c0c0c6"></div>
<div class="t " style="left:658.50px;top:253.45px;transform-origin:0 50%;">23</div>
<div class="b" style="left:680.00px;top:254.00px;width:0.90px;height:2.20px;background:#666"></div>
<div class="b" style="left:685.40px;top:253.20px;width:14.90px;height:12.50px;background:#fff;border:1px solid #c0c0c6"></div>
<div class="t " style="left:686.60px;top:253.45px;transform-origin:0 50%;">10</div>
<div class="b" style="left:703.10px;top:253.20px;width:14.90px;height:12.50px;background:#fff;border:1px solid #c0c0c6"></div>
<div class="t " style="left:704.30px;top:253.45px;transform-origin:0 50%;">12</div>
<div class="t " style="left:719.00px;top:254.40px;transform-origin:0 50%;font-size:7.5px">/16</div>
<div class="b" style="left:736.70px;top:253.20px;width:100.30px;height:12.50px;background:#fff;border:1px solid #c0c0c6"></div>
<div class="t " style="left:737.90px;top:253.45px;transform-origin:0 50%;">Estimating (Service Cente</div>
<div class="b" style="left:826.70px;top:253.20px;width:10.30px;height:12.50px;background:#1b79ba"></div>
<svg class="b" style="left:830.10px;top:258.95px" width="3.8" height="2.4" viewBox="0 0 3.8 2.4"><path d="M0 0H3.8L1.9 2.1Z" fill="#f4f8fc"/></svg>
<div class="t " style="left:657.10px;top:272.00px;transform-origin:0 50%;">Base Price:</div>
<div class="t " style="left:758.20px;top:272.00px;transform-origin:0 50%;">Date Promised:</div>
<div class="b" style="left:657.30px;top:283.90px;width:97.80px;height:12.50px;background:#fff;border:1px solid #c0c0c6"></div>
<div class="t " style="left:658.50px;top:284.15px;transform-origin:0 50%;">$105,00/CWT</div>
<div class="b" style="left:758.50px;top:283.90px;width:78.50px;height:12.50px;background:#fff;border:1px solid #c0c0c6"></div>
<div class="t " style="left:759.70px;top:284.15px;transform-origin:0 50%;">29.2.2024</div>
<div class="b" style="left:826.70px;top:283.90px;width:10.30px;height:12.50px;background:#1b79ba"></div>
<svg class="b" style="left:830.10px;top:289.65px" width="3.8" height="2.4" viewBox="0 0 3.8 2.4"><path d="M0 0H3.8L1.9 2.1Z" fill="#f4f8fc"/></svg>
<div class="t " style="left:657.10px;top:304.60px;transform-origin:0 50%;">Cost Code:</div>
<div class="b" style="left:700.00px;top:304.20px;width:137.00px;height:13.00px;background:#fff;border:1px solid #c0c0c6"></div>
<div class="b" style="left:826.70px;top:304.20px;width:10.30px;height:13.00px;background:#1b79ba"></div>
<svg class="b" style="left:830.10px;top:310.20px" width="3.8" height="2.4" viewBox="0 0 3.8 2.4"><path d="M0 0H3.8L1.9 2.1Z" fill="#f4f8fc"/></svg>
<div class="b" style="left:657.20px;top:324.30px;width:79.80px;height:13.30px;background:#1b79ba"></div>
<div class="t w" style="left:664.70px;top:325.20px;transform-origin:0 50%;">Purchasing Notes:</div>
<div class="b" style="left:657.20px;top:337.60px;width:180.00px;height:53.60px;background:#fff;border:1px solid #c4c4ca"></div>
<div class="t " style="left:657.10px;top:397.40px;transform-origin:0 50%;">Sequence:</div>
<div class="t " style="left:701.70px;top:397.40px;transform-origin:0 50%;">Mill Mark:</div>
<div class="t " style="left:781.80px;top:397.40px;transform-origin:0 50%;">PRC Unit Cost:</div>
<div class="b" style="left:657.00px;top:409.00px;width:42.40px;height:12.90px;background:#fff;border:1px solid #c0c0c6"></div>
<div class="t " style="left:658.20px;top:409.45px;transform-origin:0 50%;">1</div>
<div class="b" style="left:702.00px;top:409.00px;width:77.30px;height:12.90px;background:#fff;border:1px solid #c0c0c6"></div>
<div class="t " style="left:783.30px;top:408.70px;transform-origin:0 50%;">$100,00/CWT</div>
<div class="circ" style="left:571.75px;top:47.30px;width:25.5px;height:25.5px"></div>
<svg class="b" style="left:579.50px;top:52.25px" width="10" height="13" viewBox="0 0 10 13"><path d="M1.8 4.4L6 1.3M6 0.4V12.6" fill="none" stroke="#fff" stroke-width="2.2" stroke-linejoin="round"/></svg>
<div class="circ" style="left:99.65px;top:18.35px;width:25.3px;height:25.3px"></div>
<svg class="b" style="left:107.00px;top:23.90px" width="10" height="13" viewBox="0 0 10 13"><path d="M1.6 3.7C1.9 1.9 3.3 1.1 5 1.1C7 1.1 8.2 2.3 8.2 4C8.2 5.8 7 7 5 8.8L1.9 11.8H9.3" fill="none" stroke="#fff" stroke-width="2.2" stroke-linejoin="round"/></svg>
<div class="circ" style="left:345.90px;top:169.30px;width:25.4px;height:25.4px"></div>
<svg class="b" style="left:352.80px;top:174.40px" width="10" height="13" viewBox="0 0 10 13"><path d="M1.5 2C2.4 1.3 3.6 1.1 4.7 1.1C6.8 1.1 7.9 2.1 7.9 3.6C7.9 5.2 6.7 6.2 4.4 6.2H3.6M4.4 6.2C7 6.2 8.3 7.3 8.3 9C8.3 10.9 6.8 11.9 4.6 11.9C3.3 11.9 2.2 11.6 1.3 11" fill="none" stroke="#fff" stroke-width="2.2" stroke-linejoin="round"/></svg>
<div class="circ" style="left:723.95px;top:197.80px;width:25.6px;height:25.6px"></div>
<svg class="b" style="left:730.95px;top:202.80px" width="10" height="13" viewBox="0 0 10 13"><path d="M7.3 12.6V1.4L1.3 9.3H9.6" fill="none" stroke="#fff" stroke-width="2.2" stroke-linejoin="round"/></svg>
<div class="circ" style="left:77.95px;top:135.90px;width:25.4px;height:25.4px"></div>
<svg class="b" style="left:84.95px;top:141.70px" width="10" height="13" viewBox="0 0 10 13"><path d="M8.2 1.2H2.8L2.3 6.3C3 6.1 3.8 6 4.6 6C6.9 6 8.3 7.2 8.3 9C8.3 10.9 6.8 12 4.6 12C3.3 12 2.2 11.7 1.3 11.2" fill="none" stroke="#fff" stroke-width="2.2" stroke-linejoin="round"/></svg>
<div class="circ" style="left:645.60px;top:124.00px;width:25.4px;height:25.4px"></div>
<svg class="b" style="left:652.50px;top:128.80px" width="10" height="13" viewBox="0 0 10 13"><path d="M7.8 1.3C7.2 1.1 6.5 1.1 5.9 1.1C3.4 1.1 1.8 3.3 1.8 6.7C1.8 10.1 3.1 11.9 5.2 11.9C7.1 11.9 8.3 10.5 8.3 8.6C8.3 6.8 7.2 5.6 5.4 5.6C3.8 5.6 2.3 6.6 1.9 8.2" fill="none" stroke="#fff" stroke-width="2.2" stroke-linejoin="round"/></svg>
<div class="circ" style="left:108.05px;top:88.70px;width:25.8px;height:25.8px"></div>
<svg class="b" style="left:115.45px;top:94.50px" width="10" height="13" viewBox="0 0 10 13"><path d="M1.2 1.2H8.9L4 12.6" fill="none" stroke="#fff" stroke-width="2.2" stroke-linejoin="round"/></svg>
</body></html>
